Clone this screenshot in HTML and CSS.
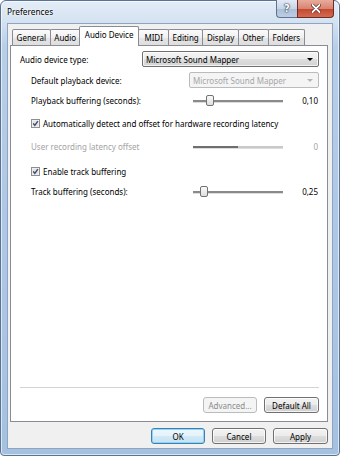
FILE: index.html
```html
<!doctype html>
<html>

<head>
	<meta charset="utf-8">
	<link rel="stylesheet" href="styles.css">
	<title>Preferences</title>
</head>

<body>
	<div class="window">
		<div class="titlebar">
			<span class="title">Preferences</span>
			<span class="capBtn help">?</span>
			<span class="capBtn close">
				<svg width="10" height="9" viewBox="0 0 10 9">
					<path d="M1.5 1 L8.5 8 M8.5 1 L1.5 8" stroke="#5b1f17" stroke-width="3.2" stroke-linecap="round" />
					<path d="M1.5 1 L8.5 8 M8.5 1 L1.5 8" stroke="#fff" stroke-width="1.8" stroke-linecap="round" />
				</svg>
			</span>
		</div>
		<div class="client">
			<div class="tabs">
				<span class="tab">General</span>
				<span class="tab">Audio</span>
				<span class="tab selected">Audio Device</span>
				<span class="tab loose">MIDI</span>
				<span class="tab">Editing</span>
				<span class="tab">Display</span>
				<span class="tab">Other</span>
				<span class="tab">Folders</span>
			</div>
			<div class="panel">
				<div class="row">
					<span class="label">Audio device type:</span>
					<div class="combo wide"><span class="comboText">Microsoft Sound Mapper</span><span class="arrow"></span></div>
				</div>
				<div class="row indent mt5">
					<span class="label">Default playback device:</span>
					<div class="combo narrow disabled"><span class="comboText">Microsoft Sound Mapper</span><span class="arrow"></span></div>
				</div>
				<div class="row indent mt4">
					<span class="label">Playback buffering (seconds):</span>
					<div class="slider"><span class="thumb" style="left: 13px"></span></div>
					<span class="value">0,10</span>
				</div>
				<div class="row indent mt7">
					<svg class="check" width="9" height="9" viewBox="0 0 9 9">
						<rect x="0.5" y="0.5" width="8" height="8" fill="#f6f6f6" stroke="#8f8f8f" />
						<rect x="1.5" y="1.5" width="6" height="6" fill="#e4e4e4" />
						<path d="M2.2 4.4 L3.8 6.3 L6.9 2.2" fill="none" stroke="#3a4a6e" stroke-width="1.4" />
					</svg>
					<span class="label">Automatically detect and offset for hardware recording latency</span>
				</div>
				<div class="row indent mt7 off">
					<span class="label">User recording latency offset</span>
					<div class="slider disabled"></div>
					<span class="value">0</span>
				</div>
				<div class="row indent mt9">
					<svg class="check" width="9" height="9" viewBox="0 0 9 9">
						<rect x="0.5" y="0.5" width="8" height="8" fill="#f6f6f6" stroke="#8f8f8f" />
						<rect x="1.5" y="1.5" width="6" height="6" fill="#e4e4e4" />
						<path d="M2.2 4.4 L3.8 6.3 L6.9 2.2" fill="none" stroke="#3a4a6e" stroke-width="1.4" />
					</svg>
					<span class="label">Enable track buffering</span>
				</div>
				<div class="row indent mt4">
					<span class="label">Track buffering (seconds):</span>
					<div class="slider"><span class="thumb" style="left: 7px"></span></div>
					<span class="value">0,25</span>
				</div>
				<div class="spacer"></div>
				<div class="separator"></div>
				<div class="buttonRow">
					<button class="btn disabled">Advanced...</button>
					<button class="btn wideBtn">Default All</button>
				</div>
			</div>
			<div class="buttonRow footer">
				<button class="btn default">OK</button>
				<button class="btn">Cancel</button>
				<button class="btn wideBtn">Apply</button>
			</div>
		</div>
	</div>
</body>

</html>
```

FILE: styles.css
```css
* {
	box-sizing: border-box;
}

body {
	margin: 0;
	font-family: "Noto Sans", "Liberation Sans", sans-serif;
	font-size: 8px;
	color: #000;
	background: #fff;
}

/* window frame */
.window {
	width: 340px;
	height: 456px;
	display: flex;
	flex-direction: column;
	padding: 0 6px 6px 6px;
	border: 1px solid #5a7393;
	border-radius: 6px 6px 4px 4px;
	background: linear-gradient(to bottom, #e4edf7 0, #d5e2f1 20px, #b9cfe8 45px, #afc8e5 200px, #a6c1e0 100%);
	box-shadow: inset 0 0 0 1px rgba(255, 255, 255, 0.6);
}

.titlebar {
	height: 22px;
	display: flex;
	align-items: flex-start;
}

.title {
	flex: 1;
	padding-top: 5px;
	line-height: 11px;
	font-size: 8.3px;
	text-shadow: 0 0 4px #fff, 0 0 2px #fff;
}

.capBtn {
	height: 18px;
	margin-top: -1px;
	display: flex;
	align-items: center;
	justify-content: center;
	border: 1px solid #5f738f;
	border-top: none;
}

.help {
	width: 21px;
	border-right: none;
	border-radius: 0 0 0 4px;
	background: linear-gradient(to bottom, #e3ebf5 0, #c6d5e7 50%, #aabfd8 51%, #bccee4 100%);
	color: #fff;
	font-family: "DejaVu Sans", sans-serif;
	font-weight: bold;
	font-size: 10px;
	text-shadow: 0 0 1px #33445c, 0 0 1px #33445c, 0 0 2px #33445c;
}

.close {
	width: 37px;
	margin-right: -1px;
	border-color: #6d2b22;
	border-radius: 0 0 4px 0;
	background: linear-gradient(to bottom, #e9ab9c 0, #d88471 50%, #c4462e 51%, #d26b52 100%);
}

/* client area */
.client {
	flex: 1;
	display: flex;
	flex-direction: column;
	background: #f0f0f0;
	border: 1px solid #8ea5c1;
	padding: 2px 4px 4px 2px;
}

.tabs {
	height: 19px;
	display: flex;
	align-items: flex-end;
	padding-left: 2px;
	position: relative;
	z-index: 1;
}

.tab {
	height: 16px;
	line-height: 15px;
	padding: 0 3.6px;
	margin-right: -1px;
	border: 1px solid #898c95;
	border-bottom: none;
	border-radius: 2px 2px 0 0;
	background: linear-gradient(to bottom, #fbfbfb 0, #f0f0f0 50%, #e5e5e5 51%, #dedede 100%);
	white-space: nowrap;
}

.tab.loose {
	padding: 0 5px;
}

.tab.selected {
	height: 20px;
	line-height: 16px;
	padding: 0 5px;
	margin: 0 -1px -1px -1px;
	background: #fff;
	position: relative;
}

.panel {
	flex: 1;
	display: flex;
	flex-direction: column;
	background: #fff;
	border: 1px solid #898c95;
	padding: 5px 8px 8px 9px;
}

.row {
	height: 16px;
	display: flex;
	align-items: center;
	white-space: nowrap;
}

.indent {
	padding-left: 11px;
}

.mt4 {
	margin-top: 4px;
}

.mt5 {
	margin-top: 5px;
}

.mt7 {
	margin-top: 7px;
}

.mt9 {
	margin-top: 9px;
}

.label {
	flex: 1;
}

.off {
	color: #a3a3a3;
}

.check {
	margin-right: 3px;
	flex: none;
}

/* drop-down boxes */
.combo {
	height: 16px;
	display: flex;
	align-items: center;
	padding: 0 5px 0 3px;
	border: 1px solid #707070;
	border-radius: 2px;
	background: linear-gradient(to bottom, #f4f4f4 0, #ececec 50%, #dedede 51%, #d3d3d3 100%);
	box-shadow: inset 0 0 0 1px rgba(255, 255, 255, 0.7);
}

.combo.wide {
	width: 177px;
}

.combo.narrow {
	width: 130px;
}

.combo.disabled {
	color: #a6a6a6;
	border-color: #b8bcbf;
	background: #f4f4f4;
	box-shadow: none;
}

.comboText {
	flex: 1;
}

.arrow {
	width: 0;
	height: 0;
	border-left: 3px solid transparent;
	border-right: 3px solid transparent;
	border-top: 3px solid #000;
}

.disabled .arrow {
	border-top-color: #b5b5b5;
}

/* track bars */
.slider {
	width: 90px;
	height: 11px;
	position: relative;
	flex: none;
}

.slider::before {
	content: "";
	position: absolute;
	left: 0;
	right: 0;
	top: 5px;
	height: 2px;
	background: #8a8a8a;
	border-bottom: 1px solid #dcdcdc;
}

.slider.disabled::before {
	background: linear-gradient(to right, #6f6f6f 50%, #c9c9c9 50%);
}

.thumb {
	position: absolute;
	top: 0;
	width: 8px;
	height: 11px;
	border: 1px solid #727272;
	border-radius: 2px;
	background: linear-gradient(to bottom, #fafafa, #dedede);
}

.value {
	width: 36px;
	text-align: right;
	padding-right: 1px;
	flex: none;
}

.spacer {
	flex: 1;
}

.separator {
	border-top: 1px solid #d3d3d3;
	margin-bottom: 9px;
}

/* push buttons */
.buttonRow {
	display: flex;
	justify-content: flex-end;
	gap: 7px;
}

.footer {
	padding-top: 6px;
}

.btn {
	width: 54px;
	height: 16px;
	padding: 0;
	font: inherit;
	color: #000;
	border: 1px solid #707070;
	border-radius: 3px;
	background: linear-gradient(to bottom, #f3f3f3 0, #ebebeb 50%, #dddddd 51%, #cfcfcf 100%);
	box-shadow: inset 0 0 0 1px rgba(255, 255, 255, 0.75);
}

.btn.wideBtn {
	width: 55px;
}

.btn.default {
	border-color: #3c7fb1;
	box-shadow: inset 0 0 0 1px #8fd3f5;
	background: linear-gradient(to bottom, #eef7fc 0, #e4f2fb 50%, #d2e9f7 51%, #c5e2f4 100%);
}

.btn.disabled {
	color: #8b8b8b;
	border-color: #b8bcbf;
	background: #f4f4f4;
	box-shadow: none;
}
```
